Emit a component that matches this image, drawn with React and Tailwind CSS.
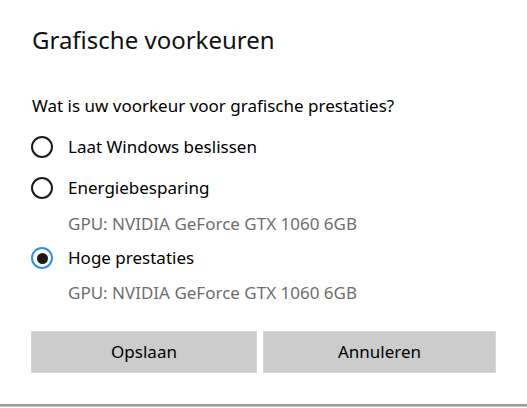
import React, { useState } from "react";

const options = [
  { id: "auto", label: "Laat Windows beslissen" },
  { id: "save", label: "Energiebesparing", gpu: "GPU: NVIDIA GeForce GTX 1060 6GB" },
  { id: "high", label: "Hoge prestaties", gpu: "GPU: NVIDIA GeForce GTX 1060 6GB" },
];

const Radio = ({ checked }) => (
  <span
    className={`flex items-center justify-center w-[22px] h-[22px] rounded-full border-2 shrink-0 ${
      checked ? "border-[#2f8ff0]" : "border-[#1a1a1a]"
    }`}
  >
    {checked && <span className="w-[11px] h-[11px] rounded-full bg-[#1a1a1a]" />}
  </span>
);

export default function App() {
  const [choice, setChoice] = useState("high");

  return (
    <div
      className="w-[527px] h-[408px] bg-white flex flex-col text-black"
      style={{ fontFamily: '"Noto Sans", "Open Sans", sans-serif' }}
    >
      <div className="pl-[31px] pr-[31px] flex flex-col">
        {/* Title */}
        <h1 className="pl-[1px] pt-[24px] text-[24px] leading-[32px] font-normal text-[#111]">
          Grafische voorkeuren
        </h1>

        <p className="pl-[1px] mt-[38px] text-[17px] leading-[24px]">
          Wat is uw voorkeur voor grafische prestaties?
        </p>

        {/* Options */}
        <div className="mt-[13px] flex flex-col">
          {options.map((o, i) => (
            <div
              key={o.id}
              className={i === 1 ? "mt-[9px]" : i === 2 ? "mt-[6px]" : ""}
            >
              <button
                onClick={() => setChoice(o.id)}
                className="h-[32px] flex items-center gap-[15px] text-[17px] leading-[24px]"
              >
                <Radio checked={choice === o.id} />
                <span>{o.label}</span>
              </button>
              {o.gpu && (
                <div
                  className={`pl-[37px] text-[17px] leading-[24px] text-[#6e6e6e] ${
                    i === 1 ? "mt-[8px]" : "mt-[7px]"
                  }`}
                >
                  {o.gpu}
                </div>
              )}
            </div>
          ))}
        </div>

        {/* Buttons */}
        <div className="mt-[26px] flex gap-[6px]">
          <button className="w-[226px] h-[42px] bg-[#cccccc] border border-[#d6d6d6] text-[17px]">
            Opslaan
          </button>
          <button className="flex-1 h-[42px] bg-[#cccccc] border border-[#d6d6d6] text-[17px]">
            Annuleren
          </button>
        </div>
      </div>

      {/* Bottom edge */}
      <div className="mt-auto mb-[1px]">
        <div className="h-[2px] bg-[#9c9c9c]" />
        <div className="h-[1px] bg-[#c4c4c4]" />
      </div>
    </div>
  );
}
